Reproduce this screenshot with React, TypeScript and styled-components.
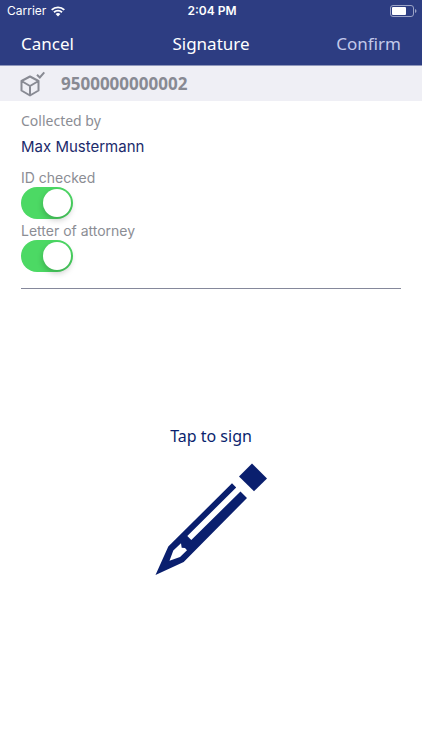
import React, { useState } from "react";
import styled, { createGlobalStyle } from "styled-components";

const GlobalStyle = createGlobalStyle`
  *, *::before, *::after { box-sizing: border-box; }
  html, body, #root { height: 100%; }
  body { margin: 0; background: #fff; font-family: Inter, sans-serif; }
  button { border: 0; padding: 0; background: none; cursor: pointer; }
`;

const humanist = `"Noto Sans", sans-serif`;

const Screen = styled.div`
  min-height: 100%;
  display: flex;
  flex-direction: column;
`;

const Header = styled.header`
  background: #2d3d82;
  color: #fff;
  border-bottom: 1px solid #8f97bb;
`;

const StatusBar = styled.div`
  display: grid;
  grid-template-columns: 1fr auto 1fr;
  align-items: center;
  height: 22px;
  padding: 0 5px 0 7px;
  font-size: 12px;
  line-height: 22px;
`;

const Carrier = styled.span`
  display: flex;
  align-items: center;
  gap: 5px;
`;

const Clock = styled.time`
  font-weight: 600;
`;

const BatteryIcon = styled.svg`
  justify-self: end;
`;

const NavBar = styled.nav`
  display: grid;
  grid-template-columns: 1fr auto 1fr;
  align-items: center;
  height: 43px;
  padding: 0 21px;
`;

const Title = styled.h1`
  margin: 0;
  font: 400 17px/24px ${humanist};
`;

const NavButton = styled.button<{ $align: "start" | "end"; $muted?: boolean }>`
  justify-self: ${(p) => p.$align};
  color: ${(p) => (p.$muted ? "#c3c9ea" : "#fff")};
  font: 400 17px/24px ${humanist};
`;

const ParcelBar = styled.section`
  display: flex;
  align-items: center;
  gap: 16px;
  height: 35px;
  padding: 0 20px;
  background: #efeff5;
  color: #888a93;
`;

const ParcelNumber = styled.strong`
  font: 700 17px/24px ${humanist};
`;

const Form = styled.section`
  display: flex;
  flex-direction: column;
  margin: 0 21px;
  padding: 10px 0 16px;
  border-bottom: 1px solid #85889b;
`;

const Caption = styled.span`
  color: #8b8d94;
  font: 400 14px/20px ${humanist};
`;

const PersonName = styled.span`
  margin: 4px 0 7px;
  color: #1b2a6b;
  font-size: 15px;
  line-height: 24px;
`;

const Field = styled.div`
  display: flex;
  flex-direction: column;
  align-items: flex-start;
`;

const FieldLabel = styled.label`
  height: 21px;
  padding-top: 4px;
  color: #8b8d94;
  font-size: 14px;
  line-height: 16px;
`;

const Switch = styled.input`
  appearance: none;
  display: flex;
  align-items: center;
  width: 52px;
  height: 32px;
  margin: 0;
  padding: 2px;
  border-radius: 16px;
  background: #d8d8dc;
  cursor: pointer;

  &::before {
    content: "";
    width: 28px;
    height: 28px;
    border-radius: 50%;
    background: #fff;
    box-shadow: 0 3px 6px rgba(0, 0, 0, 0.22);
  }

  &:checked {
    justify-content: flex-end;
    background: #4cd964;
  }
`;

const SignArea = styled.button`
  flex: 1;
  display: flex;
  flex-direction: column;
  align-items: center;
  justify-content: center;
  gap: 15px;
  color: #0a1f6e;
  font: 400 16px/24px ${humanist};
  padding-bottom: 40px;
`;

const WifiIcon = () => (
  <svg width="14" height="11" viewBox="0 0 14 11" aria-hidden="true">
    <path d="M.7 3.9a9 9 0 0 1 12.6 0M3 6.3a5.7 5.7 0 0 1 8 0" fill="none" stroke="#fff" strokeWidth="1.9" />
    <path d="M4.6 8.1a3.5 3.5 0 0 1 4.8 0L7 10.6Z" fill="#fff" />
  </svg>
);

const Battery = () => (
  <BatteryIcon width="27" height="12" viewBox="0 0 27 12" aria-hidden="true">
    <rect x=".5" y=".5" width="23" height="11" rx="2.5" fill="none" stroke="#9ba3c6" />
    <rect x="2" y="2" width="14" height="8" rx="1" fill="#fff" />
    <path d="M25 4v4q1.500-.6 1.500-2T25 4Z" fill="#9ba3c6" />
  </BatteryIcon>
);

const ParcelIcon = () => (
  <svg width="25" height="26" viewBox="0 0 25 26" fill="none" stroke="currentColor" strokeWidth="2" aria-hidden="true">
    <path d="M10 5.500 18.500 10v9.500L10 24.500 1.500 19.500V10ZM1.500 10l8.500 5 8.500-5M10 15v9.500" strokeLinejoin="round" />
    <path d="m17 3.700 2.800 2.800L24.300 1.300" />
  </svg>
);

const PencilIcon = () => (
  <svg width="112" height="112" viewBox="0 0 112 112" fill="currentColor" aria-hidden="true">
    <path d="M97 .5 112 15.500 99 28.300 84 13.600Z" />
    <path
      fillRule="evenodd"
      d="M.5 112 13.300 83.500 77 20.300 81.200 24.500 32.300 73 36.300 77 85.500 28.500 92 35 28.700 98.900ZM26 80.300 18.300 87.500 14.500 97.800 25 94 32 87.300 30 85 26.700 84.700Z"
    />
  </svg>
);

function ToggleField({ id, label }: { id: string; label: string }) {
  const [on, setOn] = useState(true);
  return (
    <Field>
      <FieldLabel htmlFor={id}>{label}</FieldLabel>
      <Switch id={id} type="checkbox" role="switch" checked={on} onChange={() => setOn(!on)} />
    </Field>
  );
}

export default function App() {
  return (
    <Screen>
      <GlobalStyle />
      <Header>
        <StatusBar>
          <Carrier>
            Carrier <WifiIcon />
          </Carrier>
          <Clock>2:04 PM</Clock>
          <Battery />
        </StatusBar>
        <NavBar>
          <NavButton $align="start">Cancel</NavButton>
          <Title>Signature</Title>
          <NavButton $align="end" $muted>Confirm</NavButton>
        </NavBar>
      </Header>
      <ParcelBar>
        <ParcelIcon />
        <ParcelNumber>9500000000002</ParcelNumber>
      </ParcelBar>
      <Form>
        <Caption>Collected by</Caption>
        <PersonName>Max Mustermann</PersonName>
        <ToggleField id="id-checked" label="ID checked" />
        <ToggleField id="attorney-letter" label="Letter of attorney" />
      </Form>
      <SignArea>
        Tap to sign
        <PencilIcon />
      </SignArea>
    </Screen>
  );
}
